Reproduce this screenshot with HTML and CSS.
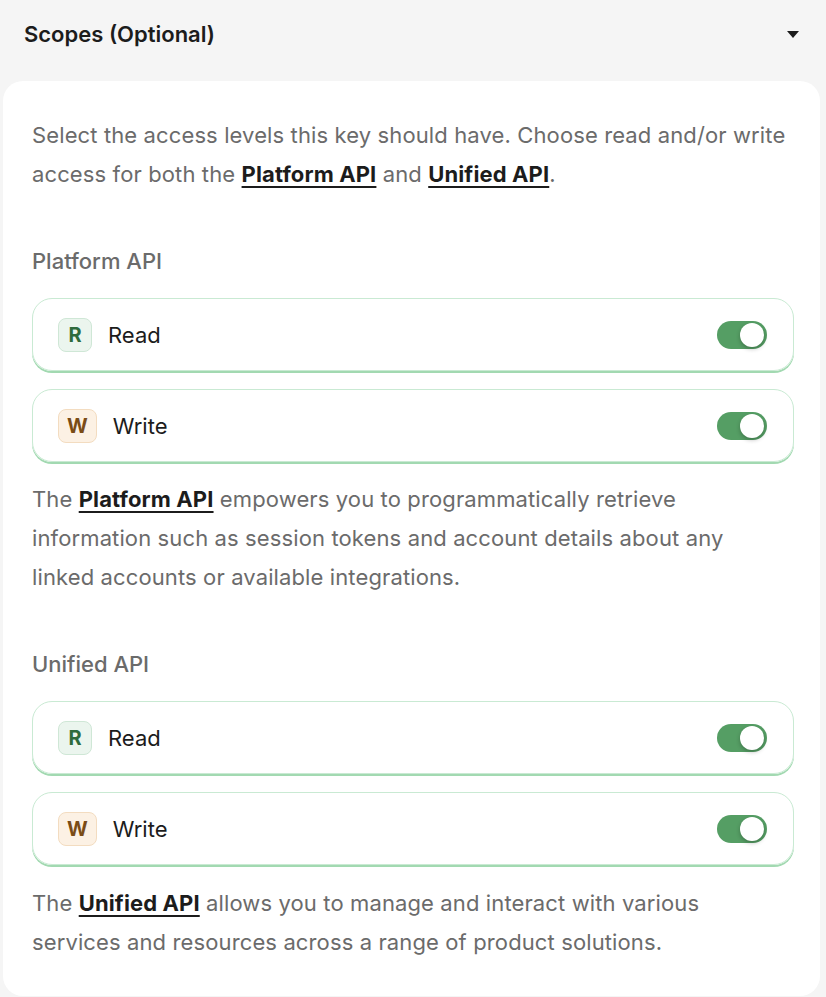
FILE: index.html
```html
<!DOCTYPE html>
<html lang="en">
<head>
    <meta charset="UTF-8">
    <meta name="viewport" content="width=device-width, initial-scale=1.0">
    <title>Scopes</title>
    <link rel="stylesheet" href="styles.css">
</head>
<body>
    <div class="scopes">
        <div class="scopes-header">
            <span class="scopes-title">Scopes (Optional)</span>
            <span class="caret"></span>
        </div>

        <div class="card">
            <p class="desc">Select the access levels this key should have. Choose read and/or write access for both the <a href="#">Platform API</a> and <a href="#">Unified API</a>.</p>

            <div class="group">
                <div class="group-label">Platform API</div>
                <div class="scope-row">
                    <span class="badge badge-read">R</span>
                    <span class="scope-name">Read</span>
                    <label class="toggle"><input type="checkbox" checked><span class="slider"></span></label>
                </div>
                <div class="scope-row">
                    <span class="badge badge-write">W</span>
                    <span class="scope-name">Write</span>
                    <label class="toggle"><input type="checkbox" checked><span class="slider"></span></label>
                </div>
                <p class="desc">The <a href="#">Platform API</a> empowers you to programmatically retrieve information such as session tokens and account details about any linked accounts or available integrations.</p>
            </div>

            <div class="group">
                <div class="group-label">Unified API</div>
                <div class="scope-row">
                    <span class="badge badge-read">R</span>
                    <span class="scope-name">Read</span>
                    <label class="toggle"><input type="checkbox" checked><span class="slider"></span></label>
                </div>
                <div class="scope-row">
                    <span class="badge badge-write">W</span>
                    <span class="scope-name">Write</span>
                    <label class="toggle"><input type="checkbox" checked><span class="slider"></span></label>
                </div>
                <p class="desc">The <a href="#">Unified API</a> allows you to manage and interact with various services and resources across a range of product solutions.</p>
            </div>
        </div>
    </div>
</body>
</html>
```

FILE: styles.css
```css
body {
    margin: 0;
    background: #f5f5f5;
    font-family: Inter, "Noto Sans", sans-serif;
    color: #1c1c1c;
}
.scopes {
    padding: 0 6px 2px 3px;
}
.scopes-header {
    height: 81px;
    display: flex;
    align-items: center;
    justify-content: space-between;
    padding: 0 21px 13px 21px;
    box-sizing: border-box;
}
.scopes-title {
    font-size: 22px;
    font-weight: 600;
}
.caret {
    width: 0;
    height: 0;
    border-left: 6px solid transparent;
    border-right: 6px solid transparent;
    border-top: 7px solid #1c1c1c;
}
.card {
    background: #fff;
    border-radius: 20px;
    padding: 35px 30px 34px 29px;
}
.desc {
    margin: 0;
    font-size: 22px;
    line-height: 39px;
    letter-spacing: 0.12px;
    color: #6b6b6b;
}
.desc a {
    color: #1c1c1c;
    font-weight: 700;
    text-decoration: underline;
    text-underline-offset: 4px;
    text-decoration-thickness: 2px;
}
.group {
    margin-top: 48px;
    display: flex;
    flex-direction: column;
    gap: 16px;
}
.group:last-child .desc {
    margin-top: 1px;
}
.group-label {
    font-size: 22px;
    font-weight: 500;
    line-height: 39px;
    color: #6b6b6b;
    margin-bottom: 1px;
}
.scope-row {
    display: flex;
    align-items: center;
    height: 73px;
    box-sizing: border-box;
    padding: 0 26px 0 25px;
    margin-right: -4px;
    border: 1px solid #c9ead3;
    border-radius: 20px;
    box-shadow: 0 2px 0 #a2d9b1;
    margin-bottom: 2px;
}
.badge {
    height: 34px;
    min-width: 34px;
    box-sizing: border-box;
    padding: 0 8px;
    border-radius: 8px;
    display: flex;
    align-items: center;
    justify-content: center;
    font-size: 20px;
    font-weight: 700;
}
.badge-read {
    background: #ebf5ee;
    border: 1px solid #cfe7d6;
    color: #2f6b3d;
}
.badge-write {
    background: #fcf1e4;
    border: 1px solid #f3dcc0;
    color: #7a4c16;
}
.scope-name {
    margin-left: 16px;
    font-size: 22px;
    flex: 1;
}
.toggle {
    position: relative;
    width: 50px;
    height: 28px;
}
.toggle input {
    display: none;
}
.slider {
    position: absolute;
    inset: 0;
    background: #559e64;
    border-radius: 14px;
}
.slider::after {
    content: "";
    position: absolute;
    top: 2px;
    right: 3px;
    width: 24px;
    height: 24px;
    border-radius: 50%;
    background: #fff;
    box-shadow: 0 2px 4px rgba(0, 0, 0, 0.25);
}
```
